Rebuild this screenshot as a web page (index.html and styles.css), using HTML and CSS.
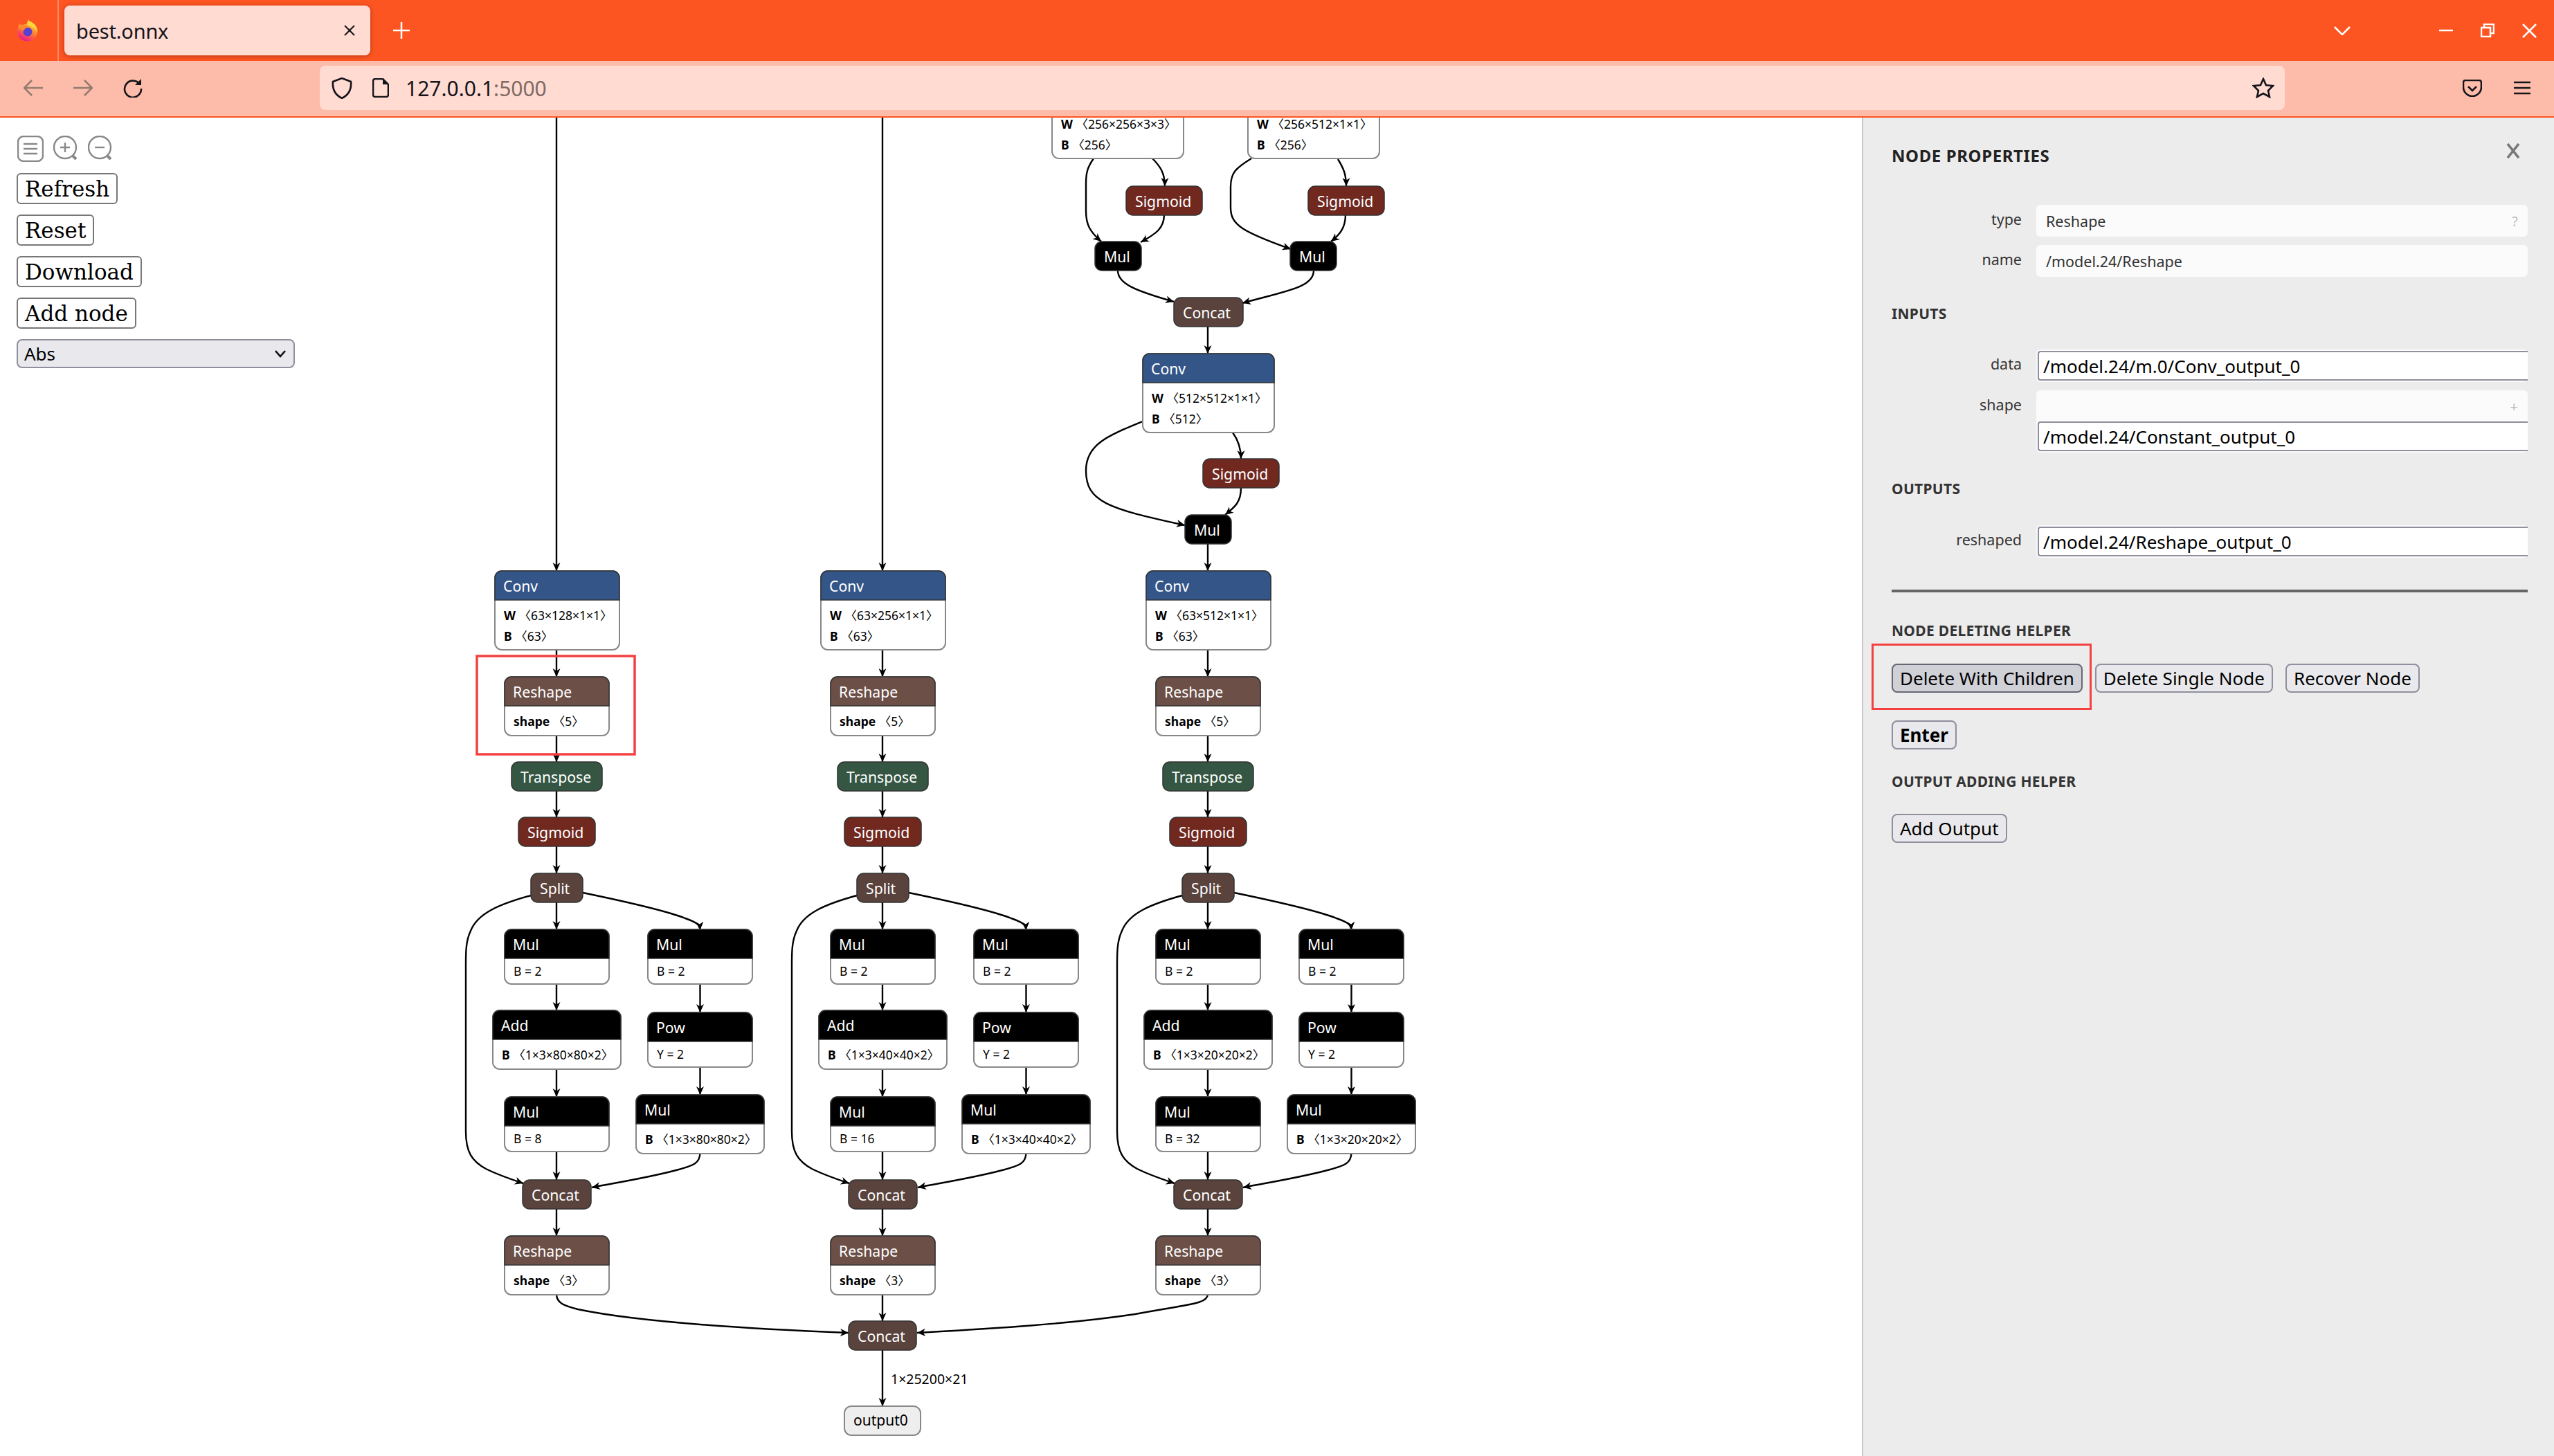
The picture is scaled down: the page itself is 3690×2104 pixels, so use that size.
FILE: index.html
```html
<!DOCTYPE html>
<html lang="en">
<head>
    <meta charset="UTF-8">
    <title>best.onnx</title>
    <link rel="stylesheet" href="styles.css">
</head>
<body>
    <div class="tabbar">
        <div class="app-icon">
            <svg width="32" height="32" viewBox="0 0 32 32">
                <defs>
                    <linearGradient id="foxBody" x1="0.8" y1="0.1" x2="0.35" y2="1">
                        <stop offset="0" stop-color="#ffd53d"/>
                        <stop offset="0.5" stop-color="#ff7a2e"/>
                        <stop offset="1" stop-color="#ee1490"/>
                    </linearGradient>
                </defs>
                <circle cx="15.5" cy="17" r="14.5" fill="url(#foxBody)"/>
                <path fill="#fd5522" d="M0 13C2 6 8 2 12 2c2-1 3-2 5-2l-3 7C9 7 4 9 0 13z"/>
                <path fill="#ffd53d" d="M17 0c2 4 8 6 11 11 2 3 2 6 2 8-3-6-8-9-13-10-1-3-1-6 0-9z"/>
                <circle cx="16" cy="18" r="6.5" fill="#5a3fd0"/>
                <path fill="#ff8a2e" d="M2 9c2-2 3-3 4-3 0 2 1 3 2 3 3-1 6 0 9 1 1 1 0 2-1 2-3 0-5 2-5 4-4 0-8-3-9-7z"/>
            </svg>
        </div>
        <div class="tab">
            <span class="tab-title">best.onnx</span>
            <svg class="tab-close" width="16" height="16" viewBox="0 0 16 16"><path d="M1 1l14 14M15 1L1 15"/></svg>
        </div>
        <svg class="new-tab" width="24" height="24" viewBox="0 0 24 24"><path d="M12 0v24M0 12h24"/></svg>
        <svg class="tab-list" width="24" height="13" viewBox="0 0 24 13"><path d="M1 1l11 11L23 1"/></svg>
        <svg class="win-min" width="20" height="4" viewBox="0 0 20 4"><path d="M0 2h20"/></svg>
        <svg class="win-max" width="20" height="20" viewBox="0 0 20 20"><path d="M1 6h13v13H1zM5 6V1h14v13h-5"/></svg>
        <svg class="win-close" width="21" height="21" viewBox="0 0 21 21"><path d="M1 1l19 19M20 1L1 20"/></svg>
    </div>

    <div class="toolbar">
        <svg class="nav-icon off" width="28" height="24" viewBox="0 0 28 24"><path d="M28 12H2M12 1L1 12l11 11"/></svg>
        <svg class="nav-icon off" width="28" height="24" viewBox="0 0 28 24"><path d="M0 12h26M16 1l11 11-11 11"/></svg>
        <svg class="nav-icon" width="28" height="28" viewBox="0 0 28 28"><path d="M24 9a12 12 0 1 0 2 6"/><path class="solid" d="M17 10h9V1z"/></svg>
        <div class="urlbar">
            <svg class="nav-icon shield" width="30" height="31" viewBox="0 0 30 31"><path d="M15 1l13 5c1 11-3 19-13 24C5 25 1 17 2 6z"/></svg>
            <svg class="nav-icon doc" width="24" height="28" viewBox="0 0 24 28"><path d="M15 1H4a3 3 0 0 0-3 3v20a3 3 0 0 0 3 3h16a3 3 0 0 0 3-3V9z"/><path class="solid" d="M15 1l8 8h-8z"/></svg>
            <span class="url">127.0.0.1<span class="url-port">:5000</span></span>
            <svg class="nav-icon star" width="32" height="30" viewBox="0 0 32 30"><path d="M16 2l4 9 10 1-7 7 2 9-9-5-9 5 2-9-7-7 10-1z"/></svg>
        </div>
        <svg class="nav-icon pocket" width="28" height="25" viewBox="0 0 28 25"><path d="M4 1h20a3 3 0 0 1 3 3v7c0 7-6 13-13 13S1 18 1 11V4a3 3 0 0 1 3-3z"/><path d="M8 10l6 6 6-6"/></svg>
        <svg class="nav-icon menu" width="24" height="20" viewBox="0 0 24 20"><path d="M0 2h24M0 10h24M0 18h24"/></svg>
    </div>

    <div class="main">
        <div class="canvas">
            <svg id="graph" class="graph" viewBox="0 170 2690 1934"></svg>
            <div class="controls">
                <div class="tool-icons">
                    <svg class="tool-icon" width="38" height="38" viewBox="0 0 38 38"><rect x="1" y="1" width="36" height="36" rx="8"/><path d="M9 12h20M9 19h20M9 26h20"/></svg>
                    <svg class="tool-icon" width="36" height="38" viewBox="0 0 36 38"><circle cx="17" cy="17" r="16"/><path d="M17 10v14M10 17h14"/><path class="handle" d="M28 29l5 5"/></svg>
                    <svg class="tool-icon" width="36" height="38" viewBox="0 0 36 38"><circle cx="17" cy="17" r="16"/><path d="M10 17h14"/><path class="handle" d="M28 29l5 5"/></svg>
                </div>
                <button class="plain-btn">Refresh</button>
                <button class="plain-btn">Reset</button>
                <button class="plain-btn">Download</button>
                <button class="plain-btn">Add node</button>
                <div class="select-wrap">
                    <select class="op-select"><option>Abs</option></select>
                    <svg class="select-arrow" width="16" height="11" viewBox="0 0 16 11"><path d="M1 1l7 8 7-8"/></svg>
                </div>
            </div>
        </div>

        <aside class="sidebar">
            <div class="sidebar-head">
                <span class="sidebar-title">NODE PROPERTIES</span>
                <svg class="sidebar-close" width="20" height="22" viewBox="0 0 20 22"><path d="M2 1l16 20M18 1L2 21"/></svg>
            </div>

            <div class="prop-row">
                <label>type</label>
                <div class="value-box text-value">Reshape<span class="value-hint">?</span></div>
            </div>
            <div class="prop-row">
                <label>name</label>
                <div class="value-box text-value">/model.24/Reshape</div>
            </div>

            <h3 class="section-title inputs-title">INPUTS</h3>
            <div class="prop-row">
                <label>data</label>
                <div class="value-box"><input type="text" value="/model.24/m.0/Conv_output_0"></div>
            </div>
            <div class="prop-row">
                <label>shape</label>
                <div class="value-box">
                    <div class="box-top"><span class="value-hint">+</span></div>
                    <input type="text" value="/model.24/Constant_output_0">
                </div>
            </div>

            <h3 class="section-title outputs-title">OUTPUTS</h3>
            <div class="prop-row">
                <label>reshaped</label>
                <div class="value-box"><input type="text" value="/model.24/Reshape_output_0"></div>
            </div>

            <hr class="divider">

            <h3 class="section-title deleting-title">NODE DELETING HELPER</h3>
            <div class="btn-row">
                <button class="ui-btn active">Delete With Children</button>
                <button class="ui-btn">Delete Single Node</button>
                <button class="ui-btn">Recover Node</button>
            </div>
            <div class="btn-row enter-row">
                <button class="ui-btn enter-btn">Enter</button>
            </div>

            <h3 class="section-title adding-title">OUTPUT ADDING HELPER</h3>
            <div class="btn-row">
                <button class="ui-btn">Add Output</button>
            </div>

            <div class="annotation"></div>
        </aside>
    </div>

    <script src="graph.js"></script>
</body>
</html>
```

FILE: styles.css
```css
* {
    box-sizing: border-box;
}
html, body {
    margin: 0;
    height: 100%;
    overflow: hidden;
}
body {
    width: 3690px;
    height: 2104px;
    display: flex;
    flex-direction: column;
    font-family: "Noto Sans", "DejaVu Sans", sans-serif;
    background: #fff;
}

/* browser chrome */
.tabbar {
    height: 88px;
    display: flex;
    align-items: center;
    background: #fd5522;
    flex: none;
}
.app-icon {
    width: 85px;
    height: 88px;
    border-right: 2px solid #fe8a66;
    display: flex;
    align-items: center;
    justify-content: center;
    padding-right: 3px;
}
.tab {
    width: 442px;
    height: 72px;
    margin-left: 8px;
    padding: 0 22px 0 17px;
    display: flex;
    align-items: center;
    justify-content: space-between;
    background: #ffdbd2;
    border-radius: 8px;
    box-shadow: 0 1px 6px rgba(90, 20, 0, .45);
}
.tab-title {
    font-size: 29px;
    letter-spacing: -.2px;
    color: #15141a;
}
.tab-close path {
    fill: none;
    stroke: #15141a;
    stroke-width: 2;
}
.new-tab {
    margin-left: 33px;
}
.new-tab path, .tab-list path, .win-min path, .win-max path, .win-close path {
    fill: none;
    stroke: #fff;
    stroke-width: 2.5;
}
.tab-list {
    margin-left: auto;
}
.win-min {
    margin-left: 128px;
}
.win-max {
    margin-left: 40px;
}
.win-close {
    margin-left: 40px;
    margin-right: 25px;
}

.toolbar {
    height: 82px;
    display: flex;
    align-items: center;
    gap: 44px;
    padding: 0 0 2px 34px;
    background: #fdbca9;
    border-bottom: 2px solid #fd5522;
    flex: none;
}
.nav-icon {
    flex: none;
}
.nav-icon path {
    fill: none;
    stroke: #15141a;
    stroke-width: 2.6;
}
.nav-icon.off path {
    stroke: #947a70;
}
.nav-icon .solid {
    fill: #15141a;
    stroke: none;
}
.urlbar {
    width: 2839px;
    height: 64px;
    margin-left: 212px;
    padding: 0 15px 0 17px;
    display: flex;
    align-items: center;
    background: #ffdbd2;
    border-radius: 8px;
}
.doc {
    margin-left: 29px;
}
.url {
    margin-left: 24px;
    font-size: 30px;
    color: #15141a;
}
.url-port {
    color: #7f6a64;
}
.star {
    margin-left: auto;
}
.pocket {
    margin-left: 213px;
}
.menu {
    margin-left: 2px;
}

/* page */
.main {
    flex: 1;
    display: flex;
    min-height: 0;
}
.canvas {
    flex: 1;
    position: relative;
    min-width: 0;
    background: #fff;
}
.graph {
    position: absolute;
    left: 0;
    top: 0;
    width: 2690px;
    height: 1934px;
    font-family: "Noto Sans", "Noto Sans CJK SC", "DejaVu Sans", sans-serif;
}
.edge {
    fill: none;
    stroke: #000;
    stroke-width: 2.4;
    marker-end: url(#arrow);
}
.arrow-head {
    fill: #000;
}
.node-body {
    fill: #fff;
    stroke: #888;
    stroke-width: 2;
}
.node-head {
    stroke: #333;
    stroke-width: 1.5;
}
.node-title {
    fill: #fff;
    font-size: 21.2px;
}
.node-row {
    fill: #000;
    font-size: 17.5px;
}
.node-row .key {
    font-weight: 700;
}
.kind-conv { fill: #335588; }
.kind-shape { fill: #6c4f47; }
.kind-transform { fill: #345642; }
.kind-activation { fill: #70281f; }
.kind-math { fill: #000; }
.kind-tensor { fill: #5a433c; }
.output-node {
    fill: #eee;
    stroke: #888;
    stroke-width: 2;
}
.output-label {
    fill: #000;
    font-size: 21px;
}
.edge-label {
    fill: #000;
    font-size: 19.5px;
}
.annotation-box {
    fill: none;
    stroke: #f44040;
    stroke-width: 3.5;
}

.controls {
    position: absolute;
    left: 24px;
    top: 26px;
    display: flex;
    flex-direction: column;
    align-items: flex-start;
    gap: 15px;
}
.tool-icons {
    display: flex;
    gap: 14px;
    margin-left: 1px;
    margin-bottom: 1px;
}
.tool-icon rect, .tool-icon circle, .tool-icon path {
    fill: none;
    stroke: #888;
    stroke-width: 2.4;
}
.tool-icon .handle {
    stroke-width: 4;
}
.plain-btn {
    height: 45px;
    padding: 0 10px;
    background: #fff;
    border: 2px solid #777;
    border-radius: 6px;
    font-family: "DejaVu Serif", serif;
    font-size: 31px;
    color: #000;
}
.select-wrap {
    position: relative;
    width: 402px;
    height: 42px;
}
.op-select {
    appearance: none;
    width: 100%;
    height: 100%;
    padding-left: 9px;
    background: #e9e9ed;
    border: 2px solid #8f8f9d;
    border-radius: 8px;
    font-family: "Noto Sans", sans-serif;
    font-size: 26px;
    color: #000;
}
.select-arrow {
    position: absolute;
    right: 13px;
    top: 16px;
}
.select-arrow path {
    fill: none;
    stroke: #111;
    stroke-width: 2.6;
}

/* node properties panel */
.sidebar {
    width: 1000px;
    flex: none;
    position: relative;
    padding: 39px 38px 0 41px;
    background: #ececec;
    border-left: 2px solid #c8c8c8;
}
.sidebar-head {
    height: 30px;
    display: flex;
    align-items: center;
    justify-content: space-between;
    margin-bottom: 57px;
}
.sidebar-title {
    font-size: 24px;
    font-weight: 700;
    color: #222;
    letter-spacing: .6px;
}
.sidebar-close {
    margin: -12px 11px 0 0;
}
.sidebar-close path {
    fill: none;
    stroke: #777;
    stroke-width: 3.6;
}
.prop-row {
    display: grid;
    grid-template-columns: 188px 1fr;
    column-gap: 21px;
    margin-bottom: 12px;
}
.prop-row label {
    text-align: right;
    font-size: 21.5px;
    line-height: 42px;
    color: #333;
}
.value-box {
    background: #fbfbfb;
    border-radius: 6px;
    padding: 2px 0 2px 2px;
}
.text-value {
    height: 46px;
    padding: 0 14px;
    display: flex;
    align-items: center;
    justify-content: space-between;
    font-size: 21.5px;
    color: #333;
}
.value-hint {
    color: #bbb;
    font-size: 20px;
}
.box-top {
    height: 43px;
    padding-right: 14px;
    display: flex;
    align-items: center;
    justify-content: flex-end;
}
.value-box input {
    display: block;
    width: 100%;
    height: 43px;
    padding: 0 6px;
    background: #fff;
    border: 2px solid #8f8f9d;
    border-right: 0;
    border-radius: 4px 0 0 4px;
    font-family: "Noto Sans", sans-serif;
    font-size: 26px;
    color: #000;
}
.section-title {
    margin: 0;
    height: 26px;
    line-height: 26px;
    font-size: 21px;
    font-weight: 700;
    letter-spacing: .3px;
    color: #333;
}
.inputs-title {
    margin-top: 40px;
    margin-bottom: 39px;
}
.outputs-title {
    margin-top: 39px;
    margin-bottom: 40px;
}
.divider {
    margin: 46px 0 0;
    height: 4px;
    background: #666;
    border: 0;
}
.deleting-title {
    margin-top: 42px;
    margin-bottom: 35px;
}
.btn-row {
    display: flex;
    gap: 18px;
}
.enter-row {
    margin-top: 40px;
}
.adding-title {
    margin-top: 33px;
    margin-bottom: 34px;
}
.ui-btn {
    height: 42px;
    padding: 0 10px 1px;
    background: #e9e9ed;
    border: 2px solid #8f8f9d;
    border-radius: 8px;
    font-family: "Noto Sans", sans-serif;
    font-size: 26px;
    color: #000;
}
.ui-btn.active {
    background: #d0d0d7;
    border-color: #676774;
}
.enter-btn {
    font-weight: 700;
}
.annotation {
    position: absolute;
    left: 12px;
    top: 760px;
    width: 318px;
    height: 96px;
    border: 3.5px solid #f44040;
}
```

FILE: graph.js
```js
// Graph data: three detection heads share the same layout, only shapes differ
const HEAD_H = 42;

function rowsHeight(rows) {
    if (!rows) return 0;
    if (typeof rows === 'string') return 37;
    return rows.length === 1 ? 43 : 72;
}

function tensorText(row, y, x) {
    return `<text class="node-row" x="${x}" y="${y}"><tspan class="key">${row[0]}</tspan> 〈${row[1]}〉</text>`;
}

function node(x, y, w, title, kind, rows) {
    const h = HEAD_H + rowsHeight(rows);
    const r = 10;
    let out = '';
    if (rows) {
        out += `<rect class="node-body" x="${x}" y="${y}" width="${w}" height="${h}" rx="${r}"/>`;
        out += `<path class="node-head kind-${kind}" d="M${x} ${y + HEAD_H}V${y + r}a${r} ${r} 0 0 1 ${r} -${r}H${x + w - r}a${r} ${r} 0 0 1 ${r} ${r}V${y + HEAD_H}z"/>`;
    } else {
        out += `<rect class="node-head kind-${kind}" x="${x}" y="${y}" width="${w}" height="${h}" rx="${r}"/>`;
    }
    if (title) {
        out += `<text class="node-title" x="${x + (rows ? 12 : 13)}" y="${y + 29.5}">${title}</text>`;
    }
    if (typeof rows === 'string') {
        out += `<text class="node-row" x="${x + 13}" y="${y + HEAD_H + 25}">${rows}</text>`;
    } else if (rows) {
        rows.forEach((row, i) => {
            out += tensorText(row, y + HEAD_H + 29 + i * 30, x + 13);
        });
    }
    return out;
}

function edge(d) {
    return `<path class="edge" d="${d}"/>`;
}

function line(x, y1, y2) {
    return edge(`M${x} ${y1}V${y2}`);
}

function head(dx, conv, mulB, addB) {
    const c = 804 + dx;
    const r = 1011.5 + dx;
    let nodes = '';
    let edges = '';

    edges += line(c, 939, 978) + line(c, 1062, 1101) + line(c, 1143, 1181) + line(c, 1223, 1262);
    edges += line(c, 1304, 1343) + line(c, 1421, 1460) + line(c, 1544, 1585) + line(c, 1663, 1705) + line(c, 1747, 1786);
    edges += line(r, 1421, 1463) + line(r, 1541, 1582);
    edges += edge(`M${767 + dx} 1294C${720 + dx} 1307 ${690 + dx} 1320 ${680 + dx} 1345C${673 + dx} 1360 ${673 + dx} 1375 ${673 + dx} 1395V1635C${673 + dx} 1665 ${682 + dx} 1678 ${702 + dx} 1689C${720 + dx} 1698 ${738 + dx} 1704 ${756 + dx} 1710`);
    edges += edge(`M${842 + dx} 1290C${900 + dx} 1302 ${960 + dx} 1315 ${990 + dx} 1327C${1004 + dx} 1332 ${1011 + dx} 1335 ${1011.5 + dx} 1344`);
    edges += edge(`M${1011.5 + dx} 1666C${1011 + dx} 1680 ${1005 + dx} 1684 ${973 + dx} 1692C${930 + dx} 1703 ${890 + dx} 1709 ${855 + dx} 1716`);

    nodes += node(715 + dx, 825, 180, 'Conv', 'conv', [['W', conv], ['B', '63']]);
    nodes += node(729 + dx, 978, 151, 'Reshape', 'shape', [['shape', '5']]);
    nodes += node(739 + dx, 1101, 131, 'Transpose', 'transform');
    nodes += node(749 + dx, 1181, 111, 'Sigmoid', 'activation');
    nodes += node(767 + dx, 1262, 75, 'Split', 'tensor');
    nodes += node(729 + dx, 1343, 151, 'Mul', 'math', 'B = 2');
    nodes += node(936 + dx, 1343, 151, 'Mul', 'math', 'B = 2');
    nodes += node(712 + dx, 1460, 185, 'Add', 'math', [['B', addB]]);
    nodes += node(936 + dx, 1463, 151, 'Pow', 'math', 'Y = 2');
    nodes += node(729 + dx, 1585, 151, 'Mul', 'math', `B = ${mulB}`);
    nodes += node(919 + dx, 1582, 185, 'Mul', 'math', [['B', addB]]);
    nodes += node(755 + dx, 1705, 99, 'Concat', 'tensor');
    nodes += node(729 + dx, 1786, 151, 'Reshape', 'shape', [['shape', '3']]);
    return { edges, nodes };
}

const heads = [
    head(0, '63×128×1×1', 8, '1×3×80×80×2'),
    head(471, '63×256×1×1', 16, '1×3×40×40×2'),
    head(941, '63×512×1×1', 32, '1×3×20×20×2')
];

let edges = '';
let nodes = '';
heads.forEach((h) => {
    edges += h.edges;
    nodes += h.nodes;
});

// Top of the first two heads runs off the page
edges += line(804, 170, 825) + line(1275, 170, 825);

// Backbone above the third head
edges += edge('M1580 229C1571 242 1569 250 1569 265V305C1569 325 1575 335 1591 349');
edges += edge('M1665 229C1676 240 1683 250 1683 269');
edges += edge('M1682 310C1682 330 1670 338 1648 350');
edges += edge('M1615 391C1615 410 1640 420 1696 436');
edges += edge('M1808 229C1785 243 1778 250 1778 270V300C1778 325 1795 335 1865 360');
edges += edge('M1933 230C1941 243 1945 252 1945 269');
edges += edge('M1944 310C1944 328 1937 338 1923 349');
edges += edge('M1898 391C1898 415 1860 420 1795 438');
edges += line(1745, 472, 511);
edges += edge('M1651 609C1600 630 1569 642 1569 680C1569 725 1600 735 1712 759');
edges += edge('M1781 625C1789 636 1793 648 1793 663');
edges += edge('M1793 705C1793 725 1785 732 1770 744');
edges += line(1745, 786, 825);

// Header of the two top nodes is scrolled out of view
nodes += node(1520, 115, 190, '', 'conv', [['W', '256×256×3×3'], ['B', '256']]);
nodes += node(1803, 115, 190, '', 'conv', [['W', '256×512×1×1'], ['B', '256']]);
nodes += node(1627, 269, 110, 'Sigmoid', 'activation');
nodes += node(1890, 269, 110, 'Sigmoid', 'activation');
nodes += node(1582, 349, 67, 'Mul', 'math');
nodes += node(1864, 349, 67, 'Mul', 'math');
nodes += node(1696, 430, 100, 'Concat', 'tensor');
nodes += node(1651, 511, 190, 'Conv', 'conv', [['W', '512×512×1×1'], ['B', '512']]);
nodes += node(1738, 663, 110, 'Sigmoid', 'activation');
nodes += node(1712, 744, 67, 'Mul', 'math');

// Final concat and output
edges += edge('M804 1870C804 1883 815 1887 835 1892C930 1912 1100 1921 1226 1926');
edges += line(1275, 1870, 1909);
edges += edge('M1745 1870C1745 1884 1722 1884 1640 1899C1540 1914 1430 1920 1325 1926');
edges += line(1275, 1951, 2032);
nodes += node(1226, 1909, 98, 'Concat', 'tensor');

const output = `<rect class="output-node" x="1220" y="2032" width="110" height="42" rx="10"/>` +
    `<text class="output-label" x="1233" y="2060">output0</text>` +
    `<text class="edge-label" x="1287" y="2000">1×25200×21</text>`;

const defs = `<defs><marker id="arrow" markerUnits="userSpaceOnUse" viewBox="0 0 12 12" refX="12" refY="6" markerWidth="12" markerHeight="12" orient="auto"><path class="arrow-head" d="M0 0.5L12 6L0 11.5L3.5 6z"/></marker></defs>`;
const annotation = `<rect class="annotation-box" x="689" y="948" width="228" height="142"/>`;

document.getElementById('graph').innerHTML = defs + edges + nodes + output + annotation;
```
